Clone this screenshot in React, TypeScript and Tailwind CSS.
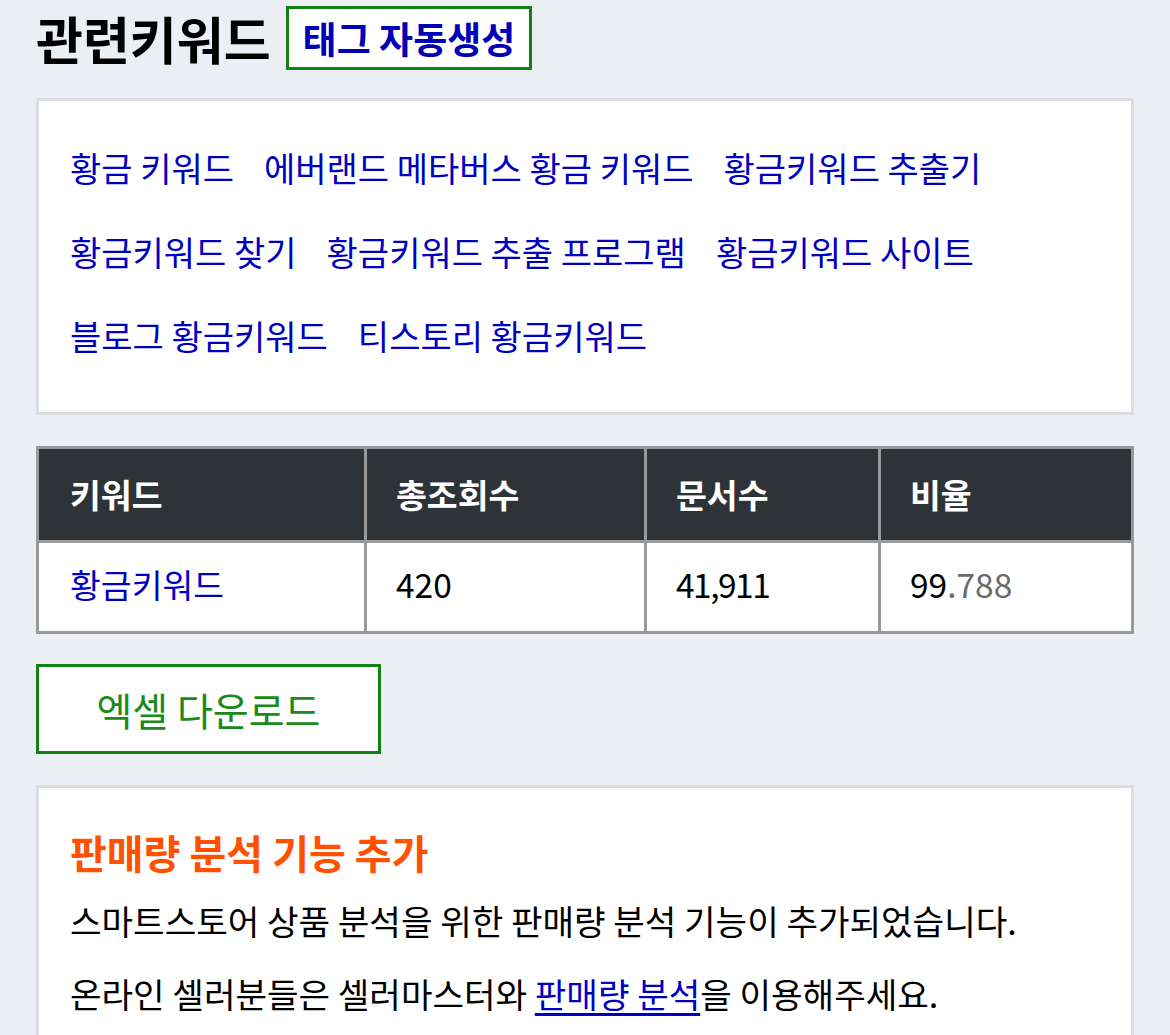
export default function App() {
  const keywords = [
    '황금 키워드',
    '에버랜드 메타버스 황금 키워드',
    '황금키워드 추출기',
    '황금키워드 찾기',
    '황금키워드 추출 프로그램',
    '황금키워드 사이트',
    '블로그 황금키워드',
    '티스토리 황금키워드',
  ];

  const headers = ['키워드', '총조회수', '문서수', '비율'];

  return (
    <div
      className="min-h-screen bg-[#ebeef3] px-[36px] pt-[6px] pb-10 text-black"
      style={{ fontFamily: '"Noto Sans CJK KR", "Noto Sans", sans-serif' }}
    >
      <div className="w-[1098px]">
        {/* title */}
        <div className="flex items-center gap-[15px]">
          <h1 className="text-[51px] font-bold leading-none">관련키워드</h1>
          <button className="h-[64px] border-[3px] border-[#128312] bg-white px-[14px] text-[37px] font-bold text-[#0000b8] leading-none">
            태그 자동생성
          </button>
        </div>

        {/* related keywords */}
        <div className="mt-[28px] border-[3px] border-[#dcdde2] bg-white px-[31px] pt-[25px] pb-[34px]">
          <div className="flex flex-wrap gap-x-[30px] text-[34px] leading-[84px]">
            {keywords.map((k) => (
              <a key={k} href="#" className="text-[#0000c0]">
                {k}
              </a>
            ))}
          </div>
        </div>

        {/* stats table */}
        <div className="mt-[31px] grid grid-cols-[325px_277px_231px_1fr] gap-[3px] border-[3px] border-[#999999] bg-[#999999] text-[33.5px]">
          {headers.map((h, i) => (
            <div
              key={h}
              className={`flex h-[91px] items-center bg-[#2d3337] font-bold text-white ${i === 0 ? 'pl-[31px]' : 'pl-[29px]'}`}
            >
              {h}
            </div>
          ))}
          <div className="flex h-[88px] items-center bg-white pl-[31px] pb-[6px]">
            <a href="#" className="text-[#0000c0]">황금키워드</a>
          </div>
          <div className="flex h-[88px] items-center bg-white pl-[29px] pb-[6px]">420</div>
          <div className="flex h-[88px] items-center bg-white pl-[29px] pb-[6px] tracking-[-1.5px]">41,911</div>
          <div className="flex h-[88px] items-center bg-white pl-[29px] pb-[6px]">
            99<span className="text-[#6b6b6b]">.788</span>
          </div>
        </div>

        {/* excel */}
        <button className="mt-[30px] flex h-[90px] w-[345px] items-center justify-center border-[3px] border-[#128312] bg-white text-[39px] leading-none text-[#1b8a1b]">
          엑셀 다운로드
        </button>

        {/* notice */}
        <div className="mt-[31px] border-[3px] border-[#dcdde2] bg-white px-[31px] pt-[36px] pb-[30px]">
          <h2 className="text-[40px] font-bold leading-[56px] text-[#ff5100]">판매량 분석 기능 추가</h2>
          <p className="mt-[4px] text-[34.3px] leading-[73px]">
            스마트스토어 상품 분석을 위한 판매량 분석 기능이 추가되었습니다.
          </p>
          <p className="text-[34.3px] leading-[73px]">
            온라인 셀러분들은 셀러마스터와{' '}
            <a href="#" className="text-[#0000c0] underline underline-offset-[5px]">
              판매량 분석
            </a>
            을 이용해주세요.
          </p>
        </div>
      </div>
    </div>
  );
}
